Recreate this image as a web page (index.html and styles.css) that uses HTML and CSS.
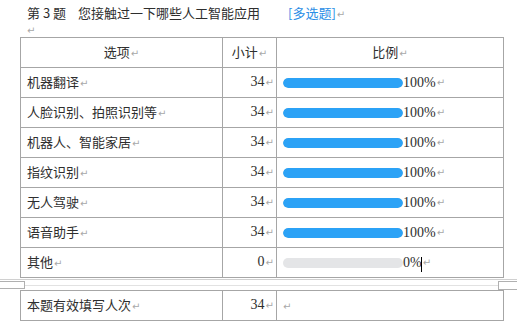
FILE: index.html
```html
<!DOCTYPE html>
<html lang="zh">
<head>
<meta charset="utf-8">
<link rel="stylesheet" href="styles.css">
</head>
<body>
<div class="page">
  <p class="title">第 3 题<span class="q">您接触过一下哪些人工智能应用</span><span class="tag">[多选题]</span><span class="pm">↵</span></p>
  <p class="blank"><span class="pm">↵</span></p>
  <table class="grid">
    <colgroup><col class="c1"><col class="c2"><col class="c3"></colgroup>
    <tr class="head">
      <td class="center">选项<span class="pm">↵</span></td>
      <td class="center">小计<span class="pm">↵</span></td>
      <td class="center">比例<span class="pm">↵</span></td>
    </tr>
    <tr><td>机器翻译<span class="pm">↵</span></td><td class="num">34<span class="pm">↵</span></td><td><div class="pct"><span class="bar"><span class="fill" style="width:100%"></span></span><span class="val">100%</span><span class="pm">↵</span></div></td></tr>
    <tr><td>人脸识别、拍照识别等<span class="pm">↵</span></td><td class="num">34<span class="pm">↵</span></td><td><div class="pct"><span class="bar"><span class="fill" style="width:100%"></span></span><span class="val">100%</span><span class="pm">↵</span></div></td></tr>
    <tr><td>机器人、智能家居<span class="pm">↵</span></td><td class="num">34<span class="pm">↵</span></td><td><div class="pct"><span class="bar"><span class="fill" style="width:100%"></span></span><span class="val">100%</span><span class="pm">↵</span></div></td></tr>
    <tr><td>指纹识别<span class="pm">↵</span></td><td class="num">34<span class="pm">↵</span></td><td><div class="pct"><span class="bar"><span class="fill" style="width:100%"></span></span><span class="val">100%</span><span class="pm">↵</span></div></td></tr>
    <tr><td>无人驾驶<span class="pm">↵</span></td><td class="num">34<span class="pm">↵</span></td><td><div class="pct"><span class="bar"><span class="fill" style="width:100%"></span></span><span class="val">100%</span><span class="pm">↵</span></div></td></tr>
    <tr><td>语音助手<span class="pm">↵</span></td><td class="num">34<span class="pm">↵</span></td><td><div class="pct"><span class="bar"><span class="fill" style="width:100%"></span></span><span class="val">100%</span><span class="pm">↵</span></div></td></tr>
    <tr><td>其他<span class="pm">↵</span></td><td class="num">0<span class="pm">↵</span></td><td><div class="pct"><span class="bar"><span class="fill" style="width:0%"></span></span><span class="val">0%</span><span class="caret"></span><span class="pm">↵</span></div></td></tr>
  </table>
  <div class="split">
    <span class="box left"></span>
    <span class="box right"></span>
  </div>
  <table class="grid">
    <colgroup><col class="c1"><col class="c2"><col class="c3"></colgroup>
    <tr><td>本题有效填写人次<span class="pm">↵</span></td><td class="num">34<span class="pm">↵</span></td><td><span class="pm solo">↵</span></td></tr>
  </table>
  <p class="blank tail"><span class="pm">↵</span></p>
</div>
</body>
</html>
```
FILE: styles.css
```css
html, body {
  margin: 0;
  padding: 0;
  background: #ffffff;
}
body {
  width: 517px;
  height: 326px;
  overflow: hidden;
  font-family: "Noto Sans CJK SC", "Liberation Sans", sans-serif;
  font-size: 13px;
  color: #2e2e2e;
}
.page {
  padding: 3px 0 0 0;
}
.title {
  margin: 0 0 0 27px;
  height: 19px;
  line-height: 19px;
  white-space: nowrap;
}
.q {
  margin-left: 12px;
}
.tag {
  color: #2b8ee6;
  margin-left: 28px;
}
.pm {
  font-family: "DejaVu Sans", sans-serif;
  font-size: 10px;
  color: #a8a8a8;
  margin-left: 1px;
}
.blank {
  margin: 0 0 0 26px;
  height: 15px;
  line-height: 14px;
}
.grid {
  margin-left: 20px;
  border-collapse: collapse;
  table-layout: fixed;
  width: 483px;
}
.c1 { width: 202px; }
.c2 { width: 54px; }
.c3 { width: 227px; }
.grid td {
  border: 1px solid #a6a6a6;
  height: 30px;
  padding: 0 0 0 6px;
  box-sizing: border-box;
  vertical-align: middle;
  white-space: nowrap;
  line-height: 16px;
}
.grid td.center {
  text-align: center;
  padding: 0;
}
.grid td.num {
  text-align: right;
  padding: 0 2px 0 0;
  font-family: "Liberation Serif", serif;
  font-size: 14px;
}
.pct {
  display: flex;
  align-items: center;
  font-family: "Liberation Serif", serif;
  font-size: 14px;
}
.bar {
  display: block;
  width: 120px;
  height: 10px;
  border-radius: 5px;
  background: #e4e5e7;
  overflow: hidden;
  margin-top: 1px;
}
.fill {
  display: block;
  height: 100%;
  background: #2ba2f6;
  border-radius: 5px;
}
.caret {
  display: inline-block;
  width: 1px;
  height: 15px;
  background: #000;
  margin-left: -1px;
  margin-top: 4px;
}
.solo {
  margin-left: 0;
}
.split {
  position: relative;
  border-top: 1px solid #d0d0d0;
  border-bottom: 1px solid #e2e2e2;
  margin-top: 1px;
  box-sizing: border-box;
  height: 7px;
  margin-bottom: 4px;
}
.box {
  position: absolute;
  top: 1px;
  height: 6px;
  border: 1px solid #b0b0b0;
  background: #fff;
}
.box.left { left: -1px; width: 25px; border-left: none; }
.box.right { right: -1px; width: 19px; border-right: none; height: 7px; }
.tail {
  margin-top: 1px;
}
```
